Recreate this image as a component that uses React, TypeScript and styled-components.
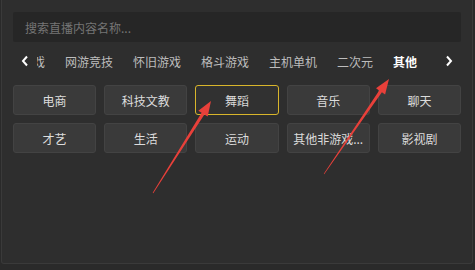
import React from 'react';
import styled, { createGlobalStyle } from 'styled-components';

const GlobalStyle = createGlobalStyle`
    html, body {
        margin: 0;
        padding: 0;
        background: #2a2a2a;
        font-family: 'Noto Sans CJK SC', 'Noto Sans', sans-serif;
    }
`;

const Page = styled.div({
    position: 'relative',
    width: '475px',
    height: '270px',
    overflow: 'hidden',
    background: '#2a2a2a'
});

const Panel = styled.div({
    margin: '0 2px 0 1px',
    height: '264px',
    boxSizing: 'border-box',
    padding: '12px 11px 0 11px',
    background: '#2e2e2e',
    border: '1px solid #3a3a3a',
    borderTop: 'none',
    borderRadius: '0 0 3px 3px',
    display: 'flex',
    flexDirection: 'column'
});

const Search = styled.input({
    height: '30px',
    boxSizing: 'border-box',
    border: 'none',
    outline: 'none',
    borderRadius: '2px',
    background: '#262626',
    color: '#ddd',
    padding: '0 12px',
    fontSize: '12px',
    fontFamily: 'inherit',
    '::placeholder': {
        color: '#555'
    }
});

const TabRow = styled.div({
    marginTop: '5px',
    height: '28px',
    display: 'flex',
    alignItems: 'stretch'
});

const Arrow = styled.div({
    width: '24px',
    flex: 'none',
    display: 'flex',
    alignItems: 'center',
    justifyContent: 'center',
    color: '#fff'
});

const Viewport = styled.div({
    flex: 1,
    overflow: 'hidden',
    display: 'flex'
});

const Strip = styled.div<{ $offset: number }>((props) => ({
    display: 'flex',
    gap: '20px',
    flex: 'none',
    marginLeft: props.$offset + 'px'
}));

const Tab = styled.div<{ $active?: boolean }>((props) => ({
    position: 'relative',
    display: 'flex',
    alignItems: 'center',
    whiteSpace: 'nowrap',
    fontSize: '12px',
    color: props.$active ? '#fff' : '#bdbdbd',
    fontWeight: props.$active ? 700 : 400,
    '::after': props.$active
        ? {
              content: '""',
              position: 'absolute',
              left: '-5px',
              right: '-6px',
              bottom: '1px',
              height: '2px',
              background: '#e9c62c'
          }
        : {}
}));

const Grid = styled.div({
    marginTop: '10px',
    display: 'grid',
    gridTemplateColumns: 'repeat(5, 1fr)',
    columnGap: '8px',
    rowGap: '8px'
});

const Chip = styled.div<{ $active?: boolean }>((props) => ({
    height: '30px',
    boxSizing: 'border-box',
    borderRadius: '3px',
    border: '1px solid ' + (props.$active ? '#d8b52b' : '#434343'),
    background: props.$active ? '#313131' : '#3a3a3a',
    color: '#dcdcdc',
    fontSize: '12px',
    display: 'flex',
    alignItems: 'center',
    justifyContent: 'center',
    whiteSpace: 'nowrap',
    overflow: 'hidden',
    padding: '0 4px'
}));

const Overlay = styled.svg({
    position: 'absolute',
    left: 0,
    top: 0,
    pointerEvents: 'none'
});

const tabs = ['休闲游戏', '网游竞技', '怀旧游戏', '格斗游戏', '主机单机', '二次元', '其他'];
const chips = ['电商', '科技文教', '舞蹈', '音乐', '聊天', '才艺', '生活', '运动', '其他非游戏...', '影视剧'];

// tapered annotation arrow from tail to head
function arrowPoints(tx: number, ty: number, hx: number, hy: number) {
    const dx = hx - tx;
    const dy = hy - ty;
    const len = Math.hypot(dx, dy);
    const ux = dx / len;
    const uy = dy / len;
    const px = -uy;
    const py = ux;
    const headLen = 15;
    const headW = 5.5;
    const bx = hx - ux * headLen;
    const by = hy - uy * headLen;
    const pts = [
        [tx + px * 0.3, ty + py * 0.3],
        [bx + px * 1.6, by + py * 1.6],
        [bx + px * headW, by + py * headW],
        [hx, hy],
        [bx - px * headW, by - py * headW],
        [bx - px * 1.6, by - py * 1.6],
        [tx - px * 0.3, ty - py * 0.3]
    ];
    return pts.map((p) => p[0].toFixed(1) + ',' + p[1].toFixed(1)).join(' ');
}

export default function App() {
    return (
        <Page>
            <GlobalStyle />
            <Panel>
                <Search placeholder="搜索直播内容名称..." />
                <TabRow>
                    <Arrow>
                        <svg width="8" height="12" viewBox="0 0 8 12">
                            <path d="M6 1.5 L2 6 L6 10.5" stroke="#fff" strokeWidth="2" fill="none" />
                        </svg>
                    </Arrow>
                    <Viewport>
                        <Strip $offset={-40}>
                            {tabs.map((t) => (
                                <Tab key={t} $active={t === '其他'}>
                                    {t}
                                </Tab>
                            ))}
                        </Strip>
                    </Viewport>
                    <Arrow>
                        <svg width="8" height="12" viewBox="0 0 8 12">
                            <path d="M2 1.5 L6 6 L2 10.5" stroke="#fff" strokeWidth="2" fill="none" />
                        </svg>
                    </Arrow>
                </TabRow>
                <Grid>
                    {chips.map((c) => (
                        <Chip key={c} $active={c === '舞蹈'}>
                            {c}
                        </Chip>
                    ))}
                </Grid>
            </Panel>
            <Overlay width="475" height="270">
                <polygon points={arrowPoints(153, 193, 211, 101)} fill="#e8403a" />
                <polygon points={arrowPoints(324, 174, 389, 79)} fill="#e8403a" />
            </Overlay>
        </Page>
    );
}
